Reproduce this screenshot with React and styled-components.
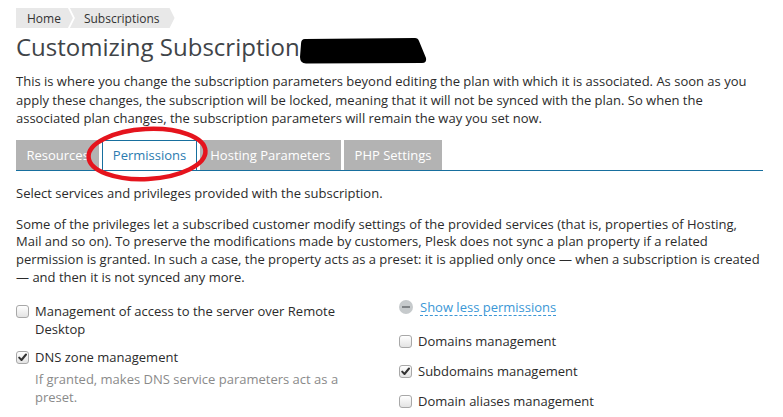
import React from 'react';
import styled, { createGlobalStyle } from 'styled-components';

const Global = createGlobalStyle`
  html, body { margin: 0; padding: 0; background: #fff; }
  body {
    font-family: "Open Sans", "DejaVu Sans", sans-serif;
    font-size: 13px;
    color: #2b2b2b;
  }
`;

const Page = styled.div`
  width: 747px;
  padding: 8px 20px 0 16px;
`;

const Crumbs = styled.nav`
  display: flex;
  height: 20px;
`;

const Crumb = styled.span`
  display: flex;
  align-items: center;
  height: 20px;
  font-size: 12px;
  color: #333;
  background: #e8e8e8;
  padding: ${p => (p.$first ? '0 12px 0 11px' : '0 15px 0 14px')};
  margin-left: ${p => (p.$first ? '0' : '-3px')};
  clip-path: ${p =>
    p.$first
      ? 'polygon(0 0, calc(100% - 5px) 0, 100% 50%, calc(100% - 5px) 100%, 0 100%)'
      : 'polygon(0 0, calc(100% - 5px) 0, 100% 50%, calc(100% - 5px) 100%, 0 100%, 5px 50%)'};
`;

const TitleRow = styled.div`
  position: relative;
  margin-top: 4px;
`;

const Title = styled.h1`
  margin: 0;
  font-size: 24px;
  font-weight: 400;
  line-height: 29px;
  color: #3f4448;
`;

const Redaction = styled.svg`
  position: absolute;
  left: 283px;
  top: 6px;
`;

const Text = styled.p`
  margin: ${p => p.$m || '0'};
  line-height: ${p => p.$lh || '18px'};
`;

const TabBar = styled.div`
  position: relative;
  display: flex;
  gap: 3px;
  margin-top: 12px;
  border-bottom: 1px solid #176f9e;
`;

const Tab = styled.div`
  box-sizing: border-box;
  height: 30px;
  line-height: ${p => (p.$active ? '28px' : '30px')};
  padding: 0 ${p => (p.$active ? '9.5px' : '10.5px')};
  font-size: 13px;
  background: ${p => (p.$active ? '#fff' : '#b3b3b3')};
  color: ${p => (p.$active ? '#2b7bb0' : '#fff')};
  border: ${p => (p.$active ? '1px solid #176f9e' : 'none')};
  border-bottom: none;
`;

const Annotation = styled.svg`
  position: absolute;
  left: 66px;
  top: -18px;
  pointer-events: none;
`;

const Columns = styled.div`
  display: grid;
  grid-template-columns: 360px 1fr;
  column-gap: 23px;
  margin-top: 11px;
`;

const Column = styled.div`
  display: flex;
  flex-direction: column;
  gap: ${p => p.$gap};
  padding-top: ${p => p.$pt || '0'};
`;

const ToggleRow = styled.div`
  display: flex;
  align-items: center;
  gap: 7px;
  height: 18px;
  margin-bottom: 4px;
`;

const MinusIcon = styled.span`
  position: relative;
  width: 14px;
  height: 14px;
  border-radius: 50%;
  background: #c6cacc;
  flex: none;
  &::after {
    content: '';
    position: absolute;
    left: 3px;
    top: 6px;
    width: 8px;
    height: 2px;
    background: #7f8386;
  }
`;

const ToggleLink = styled.a`
  color: #3b97d6;
  text-decoration: none;
  line-height: 16px;
  border-bottom: 1px dashed #3b97d6;
  margin-top: 2px;
`;

const Option = styled.div`
  display: flex;
  align-items: flex-start;
  gap: 6px;
`;

const Box = styled.span`
  box-sizing: border-box;
  flex: none;
  width: 13px;
  height: 13px;
  margin-top: 3px;
  border: 1px solid #a8a8a8;
  border-radius: 3px;
  background: linear-gradient(#ffffff, #e3e3e3);
  display: flex;
  align-items: center;
  justify-content: center;
`;

const OptionBody = styled.div`
  display: flex;
  flex-direction: column;
  gap: 4px;
  line-height: 18px;
`;

const Hint = styled.div`
  color: #8a8a8a;
`;

function Checkbox({ checked }) {
  return (
    <Box>
      {checked && (
        <svg width="9" height="9" viewBox="0 0 9 9">
          <path d="M1.2 4.6 L3.5 7 L8 1.5" fill="none" stroke="#333" strokeWidth="2" strokeLinecap="round" strokeLinejoin="round" />
        </svg>
      )}
    </Box>
  );
}

function Permission({ label, checked, hint }) {
  return (
    <Option>
      <Checkbox checked={checked} />
      <OptionBody>
        <div>{label}</div>
        {hint && <Hint>{hint}</Hint>}
      </OptionBody>
    </Option>
  );
}

export default function App() {
  return (
    <>
      <Global />
      <Page>
        <Crumbs>
          <Crumb $first>Home</Crumb>
          <Crumb>Subscriptions</Crumb>
        </Crumbs>
        <TitleRow>
          <Title>Customizing Subscription</Title>
          <Redaction width="128" height="26" viewBox="0 0 128 26">
            <path d="M6 1 L116 0 Q119 0 120 3 L127 20 Q128 25 123 25 L7 25.5 Q1 25 1 19 L2 6 Q2 1 6 1 Z" fill="#000" />
          </Redaction>
        </TitleRow>
        <Text $m="11px 0 0" $lh="18.5px">
          This is where you change the subscription parameters beyond editing the plan with which it is associated. As soon as you apply these changes, the subscription will be locked, meaning that it will not be synced with the plan. So when the associated plan changes, the subscription parameters will remain the way you set now.
        </Text>
        <TabBar>
          <Tab>Resources</Tab>
          <Tab $active>Permissions</Tab>
          <Tab>Hosting Parameters</Tab>
          <Tab>PHP Settings</Tab>
          <Annotation width="130" height="64" viewBox="0 0 130 64">
            <ellipse cx="65" cy="32" rx="58.5" ry="25" fill="none" stroke="#e5141d" strokeWidth="4.5" transform="rotate(-3 65 32)" />
          </Annotation>
        </TabBar>
        <Text $m="13px 0 0">Select services and privileges provided with the subscription.</Text>
        <Text $m="14px 0 0" $lh="17.8px">
          Some of the privileges let a subscribed customer modify settings of the provided services (that is, properties of Hosting, Mail and so on). To preserve the modifications made by customers, Plesk does not sync a plan property if a related permission is granted. In such a case, the property acts as a preset: it is applied only once — when a subscription is created — and then it is not synced any more.
        </Text>
        <Columns>
          <Column $gap="10px" $pt="4px">
            <Permission label="Management of access to the server over Remote Desktop" />
            <Permission
              label="DNS zone management"
              checked
              hint="If granted, makes DNS service parameters act as a preset."
            />
          </Column>
          <Column $gap="12px">
            <ToggleRow>
              <MinusIcon />
              <ToggleLink href="#">Show less permissions</ToggleLink>
            </ToggleRow>
            <Permission label="Domains management" />
            <Permission label="Subdomains management" checked />
            <Permission label="Domain aliases management" />
          </Column>
        </Columns>
      </Page>
    </>
  );
}
